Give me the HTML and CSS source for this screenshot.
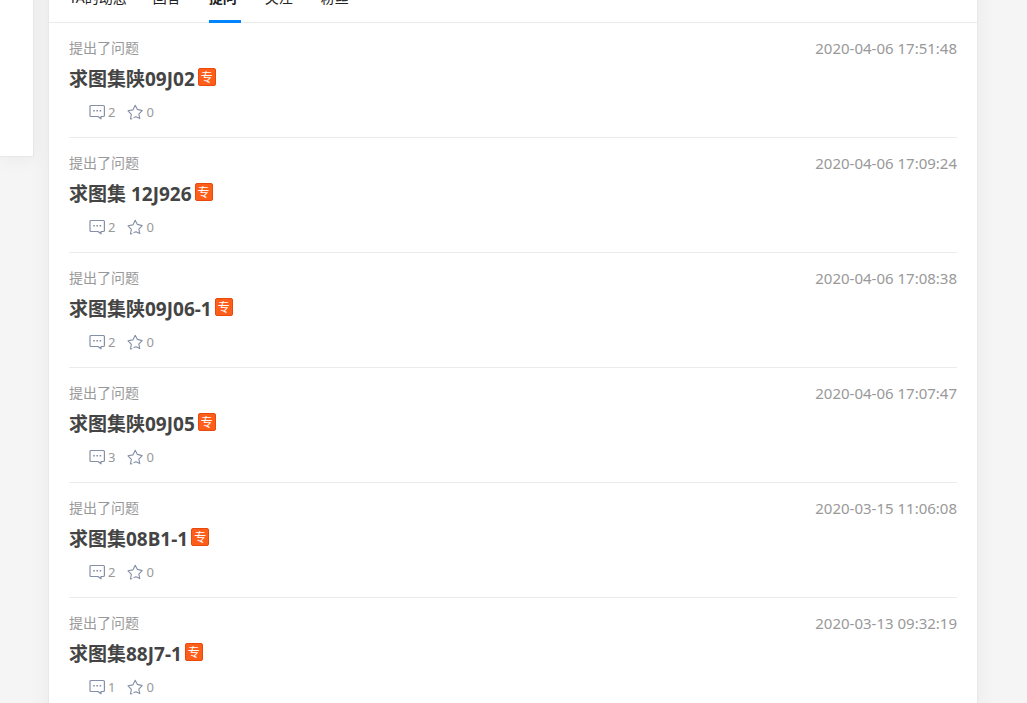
FILE: index.html
```
<!DOCTYPE html>
<html lang="zh-CN">
<head>
    <meta charset="UTF-8">
    <meta name="viewport" content="width=device-width, initial-scale=1.0">
    <title>TA的提问</title>
    <link rel="stylesheet" href="styles.css">
</head>
<body>
    <svg class="sprite" aria-hidden="true">
        <symbol id="icon-comment" viewBox="0 0 16 16">
            <path d="M2 1.500h12.400a1 1 0 0 1 1 1v9a1 1 0 0 1-1 1h-2.400v2.300l-3-2.300H2a1 1 0 0 1-1-1v-9a1 1 0 0 1 1-1z" fill="none" stroke="currentColor" stroke-width="1.200" stroke-linejoin="round"/>
            <path d="M4.200 6h1.600v1.600H4.200zM7.400 6H9v1.600H7.400zM10.600 6h1.600v1.600h-1.600z" fill="currentColor"/>
        </symbol>
        <symbol id="icon-star" viewBox="0 0 16 16">
            <path d="M5 14.800l-1.600.2 1-4.600L1 6.800l4.900-.9L8.200 1.200l2.200 4.200 4.800 1.200-3.400 3.600 1 4.400L9 12.800l-2 .8" fill="none" stroke="currentColor" stroke-width="1.100" stroke-linejoin="round" stroke-linecap="round"/>
        </symbol>
    </svg>
    <div class="page">
        <aside class="side"></aside>
        <main class="main">
            <nav class="tabs">
                <a class="tab" href="#">TA的动态</a>
                <a class="tab" href="#">回答</a>
                <a class="tab active" href="#">提问</a>
                <a class="tab" href="#">关注</a>
                <a class="tab" href="#">粉丝</a>
            </nav>
            <div class="list">
                <article class="item">
                    <div class="item-head"><span>提出了问题</span><time>2020-04-06 17:51:48</time></div>
                    <h2 class="title"><a href="#">求图集陕09J02</a><span class="badge">专</span></h2>
                    <div class="meta">
                        <button class="count" type="button" aria-label="评论 2"><svg><use href="#icon-comment"/></svg>2</button>
                        <button class="count" type="button" aria-label="收藏 0"><svg><use href="#icon-star"/></svg>0</button>
                    </div>
                </article>
                <article class="item">
                    <div class="item-head"><span>提出了问题</span><time>2020-04-06 17:09:24</time></div>
                    <h2 class="title"><a href="#">求图集 12J926</a><span class="badge">专</span></h2>
                    <div class="meta">
                        <button class="count" type="button" aria-label="评论 2"><svg><use href="#icon-comment"/></svg>2</button>
                        <button class="count" type="button" aria-label="收藏 0"><svg><use href="#icon-star"/></svg>0</button>
                    </div>
                </article>
                <article class="item">
                    <div class="item-head"><span>提出了问题</span><time>2020-04-06 17:08:38</time></div>
                    <h2 class="title"><a href="#">求图集陕09J06-1</a><span class="badge">专</span></h2>
                    <div class="meta">
                        <button class="count" type="button" aria-label="评论 2"><svg><use href="#icon-comment"/></svg>2</button>
                        <button class="count" type="button" aria-label="收藏 0"><svg><use href="#icon-star"/></svg>0</button>
                    </div>
                </article>
                <article class="item">
                    <div class="item-head"><span>提出了问题</span><time>2020-04-06 17:07:47</time></div>
                    <h2 class="title"><a href="#">求图集陕09J05</a><span class="badge">专</span></h2>
                    <div class="meta">
                        <button class="count" type="button" aria-label="评论 3"><svg><use href="#icon-comment"/></svg>3</button>
                        <button class="count" type="button" aria-label="收藏 0"><svg><use href="#icon-star"/></svg>0</button>
                    </div>
                </article>
                <article class="item">
                    <div class="item-head"><span>提出了问题</span><time>2020-03-15 11:06:08</time></div>
                    <h2 class="title"><a href="#">求图集08B1-1</a><span class="badge">专</span></h2>
                    <div class="meta">
                        <button class="count" type="button" aria-label="评论 2"><svg><use href="#icon-comment"/></svg>2</button>
                        <button class="count" type="button" aria-label="收藏 0"><svg><use href="#icon-star"/></svg>0</button>
                    </div>
                </article>
                <article class="item">
                    <div class="item-head"><span>提出了问题</span><time>2020-03-13 09:32:19</time></div>
                    <h2 class="title"><a href="#">求图集88J7-1</a><span class="badge">专</span></h2>
                    <div class="meta">
                        <button class="count" type="button" aria-label="评论 1"><svg><use href="#icon-comment"/></svg>1</button>
                        <button class="count" type="button" aria-label="收藏 0"><svg><use href="#icon-star"/></svg>0</button>
                    </div>
                </article>
            </div>
        </main>
    </div>
</body>
</html>
```
FILE: styles.css
```
* {
    box-sizing: border-box;
}
body {
    margin: 0;
    height: 100vh;
    overflow: hidden;
    background: #f5f5f5;
    color: #999;
    font-family: "Noto Sans", "Noto Sans CJK SC", sans-serif;
    font-size: 14px;
}
a {
    color: inherit;
    text-decoration: none;
}
.sprite {
    display: none;
}
.page {
    display: flex;
    align-items: flex-start;
    gap: 14px;
    margin-top: -26px;
    padding-right: 49px;
}
.side,
.main {
    background: #fff;
    border: 1px solid #e8e8e8;
    box-shadow: 0 2px 20px rgba(0, 0, 0, 0.05);
}
.side {
    flex: 0 0 34px;
    height: 183px;
    border-left: none;
    border-radius: 0 0 2px 0;
}
.main {
    flex: 1;
    min-width: 0;
}
.tabs {
    display: flex;
    gap: 24px;
    padding: 0 20px;
    border-bottom: 1px solid #ebebeb;
    color: #222;
}
.tab {
    height: 48px;
    margin-bottom: -1px;
    padding-right: 4px;
    border-bottom: 3px solid transparent;
    line-height: 46px;
}
.tab:first-child {
    padding-right: 2px;
}
.tab.active {
    border-color: #0084ff;
    font-weight: bold;
}
.list {
    padding: 0 20px;
}
.item {
    padding: 15px 0;
    border-bottom: 1px solid #ebebeb;
}
.item-head {
    display: flex;
    justify-content: space-between;
    line-height: 20px;
}
.item-head time {
    font-size: 15px;
}
.title {
    display: flex;
    align-items: center;
    gap: 3px;
    margin: 7px 0 9px;
    color: #444;
    font-size: 19px;
    line-height: 28px;
}
.badge {
    width: 18px;
    height: 18px;
    margin-bottom: 4px;
    border: 1px solid #e84a0c;
    border-radius: 2px;
    background: #ff5e1a;
    color: #fff;
    font-size: 12px;
    font-weight: normal;
    line-height: 17px;
    text-align: center;
}
.meta {
    display: flex;
    gap: 12px;
    padding-left: 20px;
}
.count {
    display: flex;
    align-items: center;
    gap: 3px;
    padding: 0;
    border: none;
    background: none;
    color: #999;
    font-family: inherit;
    font-size: 13px;
    line-height: 20px;
    cursor: pointer;
}
.count svg {
    width: 16px;
    height: 16px;
    color: #8590a6;
}
```
